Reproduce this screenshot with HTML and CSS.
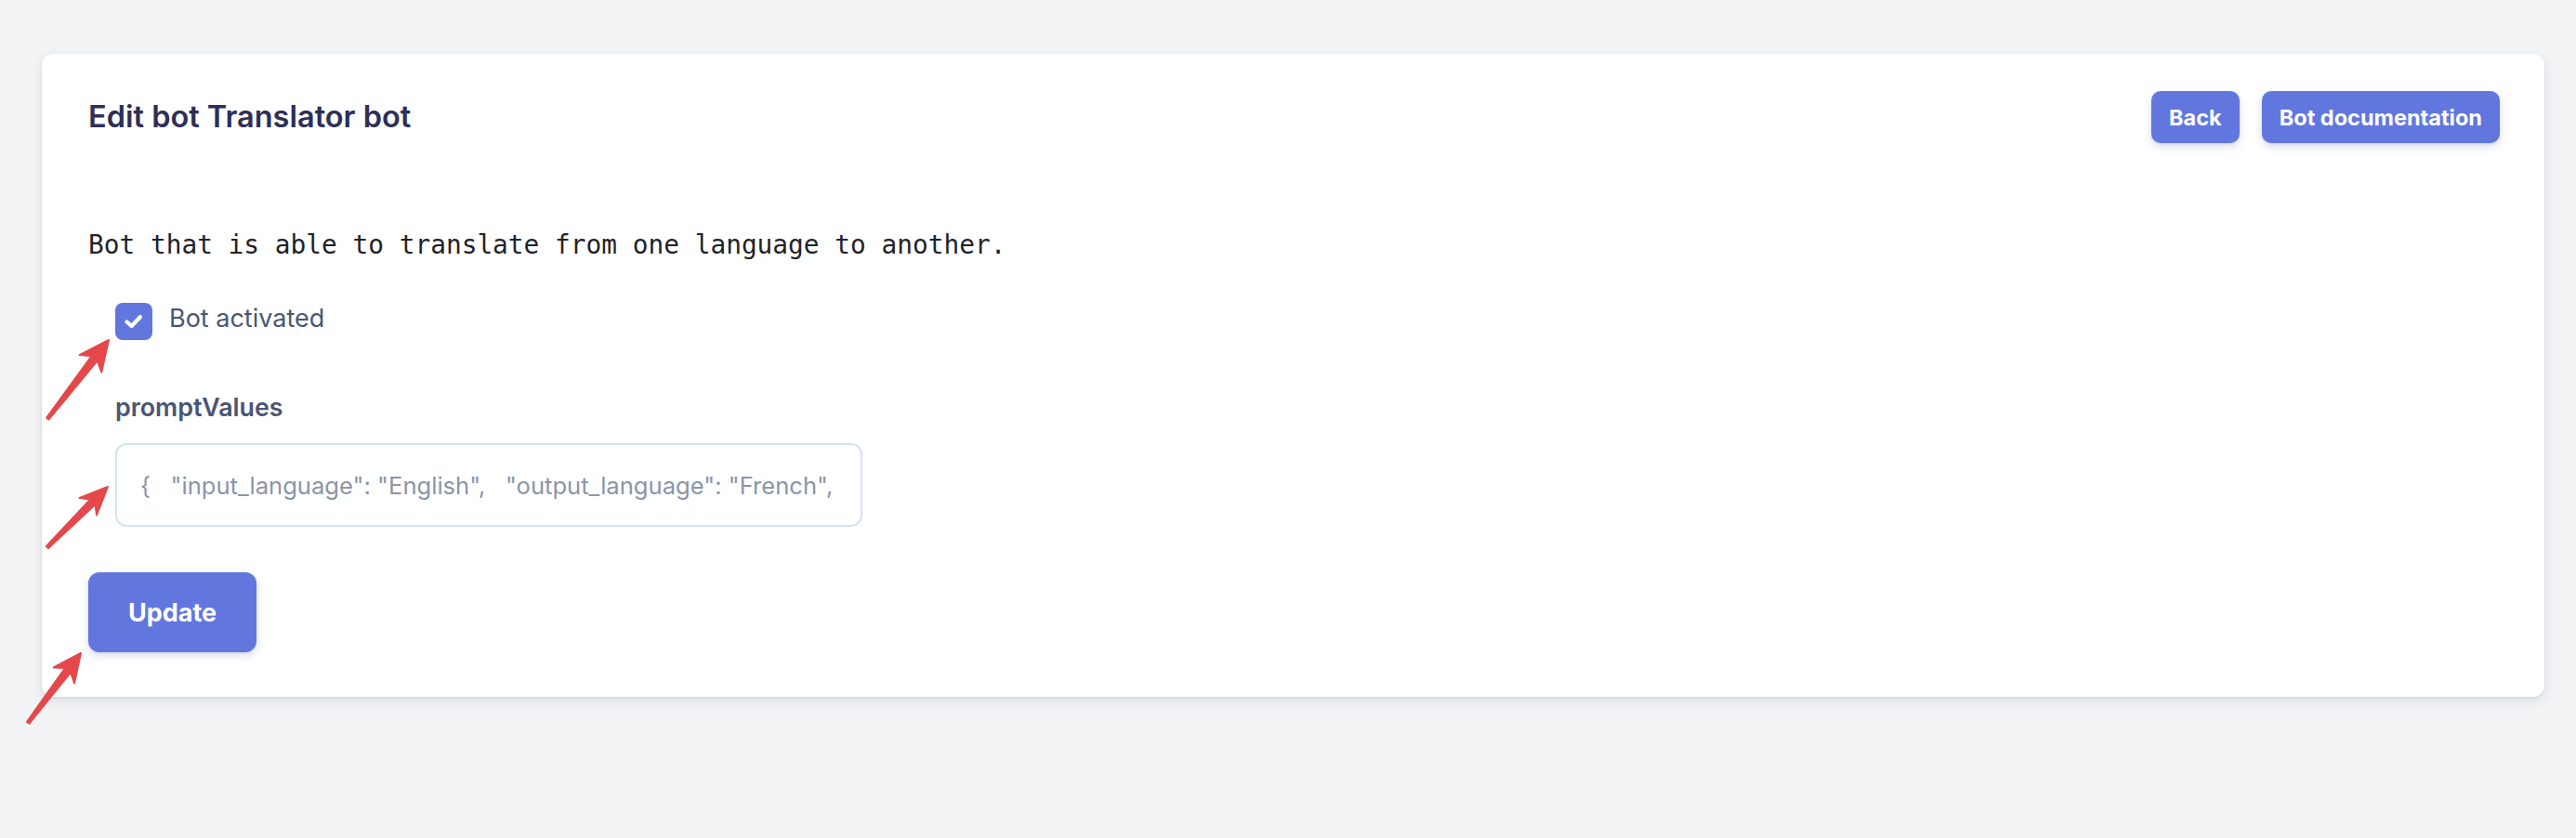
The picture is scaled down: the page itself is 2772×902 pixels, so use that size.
FILE: index.html
```html
<!DOCTYPE html>
<html lang="en">
<head>
<meta charset="utf-8">
<title>Edit bot Translator bot</title>
<link rel="stylesheet" href="styles.css">
</head>
<body>
<main class="card">
  <header class="card-header">
    <h1 class="title">Edit bot Translator bot</h1>
    <div class="actions">
      <button class="btn btn-sm" type="button">Back</button>
      <button class="btn btn-sm" type="button">Bot documentation</button>
    </div>
  </header>
  <p class="description">Bot that is able to translate from one language to another.</p>
  <label class="check-row">
    <span class="checkbox">
      <svg viewBox="0 0 24 24" width="24" height="24"><path d="M4.5 12.5 L9.5 17 L19 7" fill="none" stroke="#fff" stroke-width="4.2" stroke-linecap="round" stroke-linejoin="round"/></svg>
    </span>
    <span class="check-label">Bot activated</span>
  </label>
  <div class="field">
    <div class="field-label">promptValues</div>
    <input class="field-input" type="text" value="{   &quot;input_language&quot;: &quot;English&quot;,   &quot;output_language&quot;: &quot;French&quot;,   &quot;text&quot;: &quot;Hello&quot; }">
  </div>
  <button class="btn btn-lg" type="button">Update</button>
</main>
<svg class="annotations" width="2772" height="902" viewBox="0 0 2772 902">
  <g fill="#e5484a" stroke="#e5484a" stroke-width="2" stroke-linejoin="round">
    <path transform="translate(117 366) rotate(-52.2)" d="M0 0 L-32 15 L-25 4 L-107 1.5 L-107 -1.5 L-25 -4 L-32 -15 Z"/>
    <path transform="translate(116 524) rotate(-45)" d="M0 0 L-30 13 L-23 3.8 L-92 1.5 L-92 -1.5 L-23 -3.8 L-30 -13 Z"/>
    <path transform="translate(87 703) rotate(-52.8)" d="M0 0 L-30 14 L-23 3.8 L-94 1.5 L-94 -1.5 L-23 -3.8 L-30 -14 Z"/>
  </g>
</svg>
</body>
</html>
```
FILE: styles.css
```css
html, body {
  margin: 0;
  background: #f2f3f5;
}
body {
  padding: 58px 34px 0 45px;
  font-family: Inter, "Noto Sans", sans-serif;
  min-height: 902px;
  box-sizing: border-box;
  position: relative;
}
.card {
  background: #fff;
  border-radius: 12px;
  padding: 40px 48px 48px 50px;
  box-shadow: 0 4px 12px rgba(30, 35, 60, 0.10), 0 1px 3px rgba(30, 35, 60, 0.08);
}
.card-header {
  display: flex;
  justify-content: space-between;
  align-items: center;
  height: 56px;
}
.title {
  margin: 0;
  font-size: 32.5px;
  font-weight: 600;
  color: #2d2f57;
  line-height: 40px;
}
.actions {
  display: flex;
  gap: 24px;
}
.btn {
  border: none;
  background: #6177de;
  color: #fff;
  font-family: Inter, "Noto Sans", sans-serif;
  font-weight: 700;
  cursor: pointer;
  box-shadow: 0 4px 10px rgba(60, 70, 140, 0.18), 0 1px 2px rgba(60, 70, 140, 0.15);
}
.btn-sm {
  height: 56px;
  padding: 0 19px;
  font-size: 23.5px;
  border-radius: 10px;
}
.btn-lg {
  display: block;
  height: 86px;
  padding: 0 43px;
  font-size: 27px;
  border-radius: 12px;
  margin-top: 49px;
}
.description {
  margin: 89px 0 0;
  font-family: "DejaVu Sans Mono", monospace;
  font-size: 27.8px;
  line-height: 42px;
  color: #1f2329;
}
.check-row {
  display: flex;
  align-items: flex-start;
  gap: 18px;
  margin-top: 41px;
  margin-left: 29px;
}
.checkbox {
  width: 40px;
  height: 40px;
  border-radius: 8px;
  background: #6177de;
  display: flex;
  align-items: center;
  justify-content: center;
}
.check-label {
  font-size: 27px;
  line-height: 34px;
  color: #4a5573;
}
.field {
  margin-left: 29px;
  margin-top: 57px;
}
.field-label {
  font-size: 26.8px;
  font-weight: 600;
  line-height: 30px;
  color: #4a5573;
}
.field-input {
  display: block;
  margin-top: 24px;
  width: 804px;
  height: 90px;
  box-sizing: border-box;
  border: 2px solid #d3e3f3;
  border-radius: 12px;
  padding: 0 25px;
  font-family: Inter, "Noto Sans", sans-serif;
  font-size: 25.6px;
  color: #8a95a8;
  outline: none;
  background: #fff;
}
.annotations {
  position: absolute;
  left: 0;
  top: 0;
  pointer-events: none;
}
```
